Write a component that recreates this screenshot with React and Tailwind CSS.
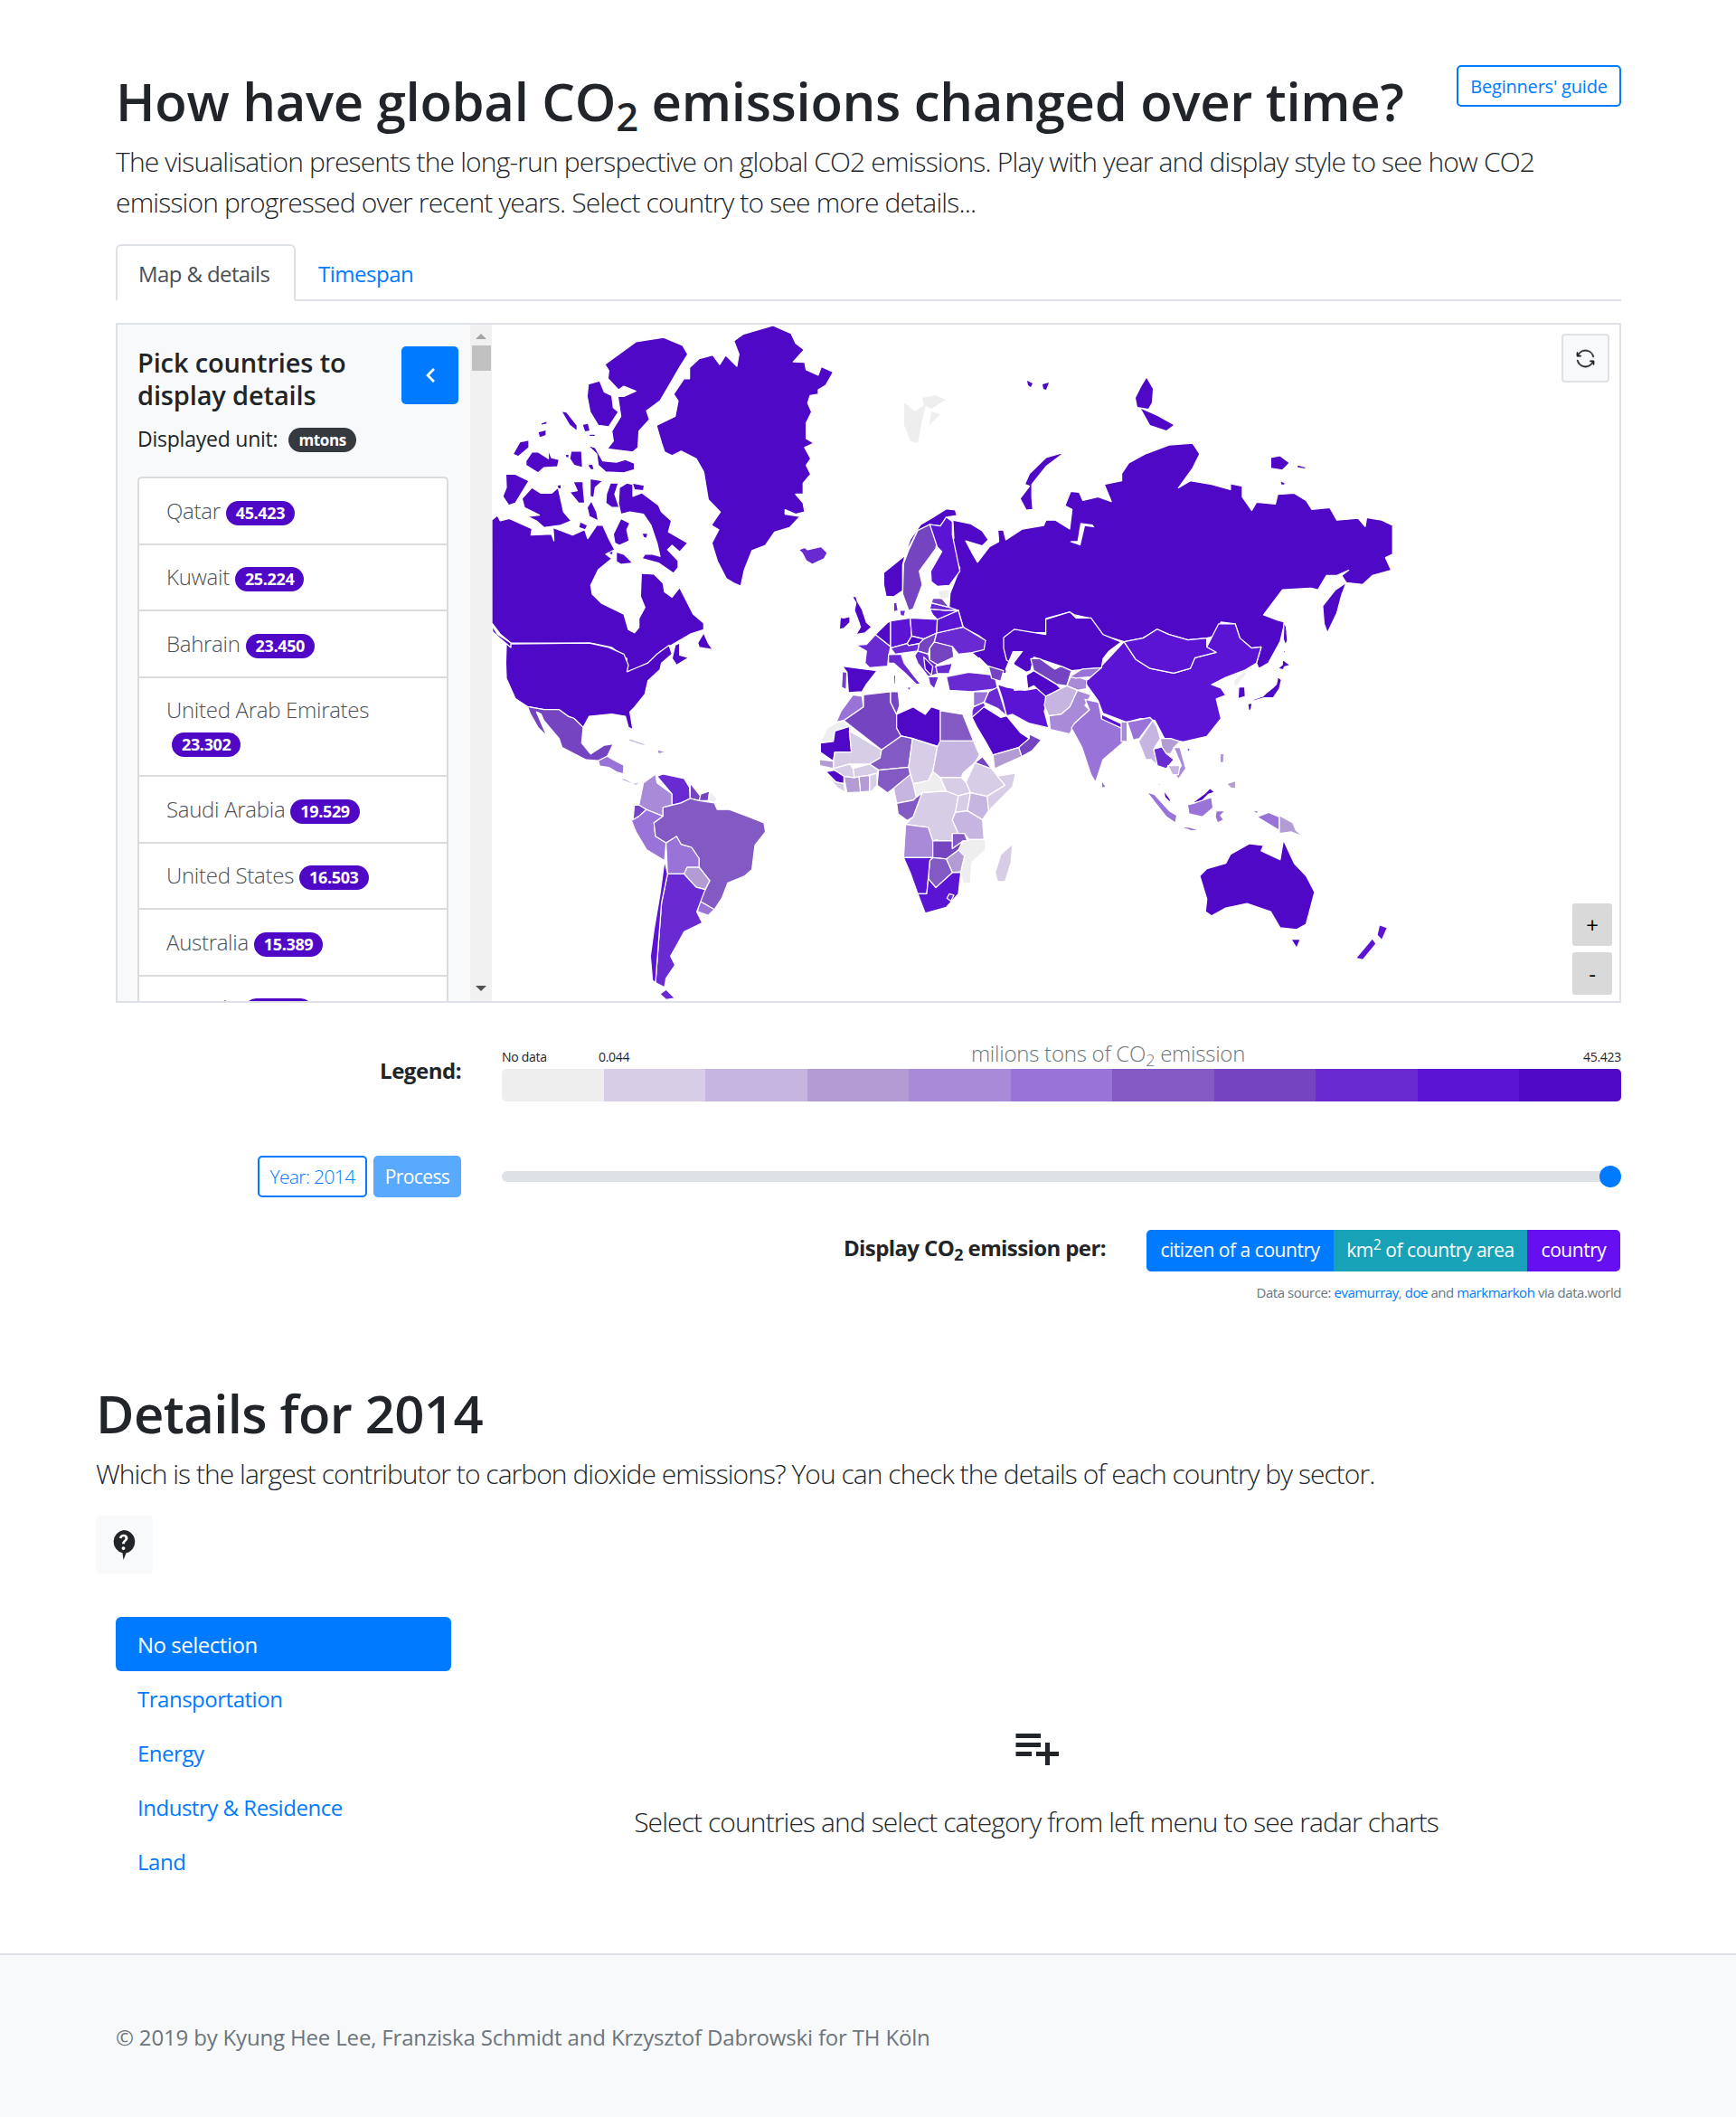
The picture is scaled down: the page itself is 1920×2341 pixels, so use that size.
import { FaChevronLeft } from 'react-icons/fa'
import { GoSync } from 'react-icons/go'
import { MdPlaylistAdd } from 'react-icons/md'

const C = ['#eeeeee', '#d8cde6', '#c5b5e0', '#b39cd4', '#a98ad8', '#9a73d9', '#835ac4', '#7544c0', '#6a2ad2', '#5c14d4', '#4f08c5']

const countries = [
  ['Qatar', '45.423'],
  ['Kuwait', '25.224'],
  ['Bahrain', '23.450'],
  ['United Arab Emirates', '23.302'],
  ['Saudi Arabia', '19.529'],
  ['United States', '16.503'],
  ['Australia', '15.389'],
  ['Canada', '15.117'],
]

// americas, traced at 3x / 2.036x
const westMap = [
  [10, '417,108 520,57 612,47 675,65 692,85 660,120 600,190 555,212 565,232 530,258 527,295 510,305 425,298 445,280 440,258 470,225 460,180 480,180 520,168 480,157 462,165 427,140 430,122'],
  [10, '362,152 400,145 415,170 440,178 445,205 462,215 430,248 395,245 368,215 358,180'],
  [10, '845,55 875,40 975,20 1035,38 1050,60 1078,75 1042,102 1080,103 1085,120 1125,132 1135,113 1175,125 1150,155 1125,165 1125,175 1098,178 1090,195 1103,215 1085,240 1085,275 1110,285 1080,295 1100,320 1085,335 1100,355 1075,375 1075,400 1050,400 1075,420 1080,440 1050,445 1015,435 1015,445 1065,450 1030,475 980,485 950,515 905,527 880,570 868,607 845,600 820,590 790,550 772,510 795,480 770,470 800,440 760,412 745,350 720,320 670,303 640,313 615,305 605,285 588,245 650,225 660,190 645,175 680,140 698,140 698,115 730,95 775,87 798,108 818,87 855,112 862,85'],
  [10, '205,240 225,235 225,242 205,245'],
  [10, '195,260 222,255 222,268 200,273'],
  [10, '272,213 290,215 325,245 325,258 300,245'],
  [10, '342,243 362,240 368,258 350,260'],
  [10, '365,265 385,265 385,270 365,270'],
  [10, '112,310 135,282 165,278 165,295 130,315'],
  [10, '155,325 175,305 195,305 230,320 228,298 240,318 265,322 260,338 215,340 195,352 155,335'],
  [10, '285,310 298,310 298,318 288,318'],
  [10, '305,303 340,303 343,340 315,335 300,320'],
  [10, '360,290 385,295 410,325 455,328 485,322 515,330 515,345 480,352 420,350 395,335 390,310'],
  [10, '360,335 375,330 382,345 370,345'],
  [10, '88,355 120,355 165,370 120,420 98,425 78,405 90,385'],
  [10, '142,410 175,385 205,398 240,398 262,385 280,440 305,460 270,470 215,475 190,460 160,450 200,447 150,430'],
  [10, '258,380 272,378 272,388 262,388'],
  [10, '312,372 345,372 345,382 350,420 330,420 300,395 325,392'],
  [10, '368,365 410,370 385,385 380,408 368,405'],
  [10, '358,430 372,415 390,440 395,460 365,450'],
  [10, '422,400 435,375 462,375 450,400 465,430 440,430 420,420'],
  [10, '465,385 490,375 510,378 510,405 540,397 595,425 605,440 638,460 628,485 692,510 665,530 640,515 625,525 660,550 660,565 645,578 595,555 540,545 550,535 575,535 600,540 590,510 570,470 545,445 500,440 470,445 462,420'],
  [10, '508,375 548,380 545,392 515,390'],
  [10, '335,462 360,470 352,480 330,475'],
  [10, '445,490 470,455 500,465 490,480 498,505 465,515 450,510'],
  [10, '540,488 560,488 555,500 545,497'],
  [10, '420,520 445,530 440,538 425,530'],
  [10, '455,530 480,535 510,555 470,558 455,552'],
  [10, '42,458 60,448 70,460 100,455 175,478 172,492 240,490 248,505 245,475 310,492 350,480 360,500 390,470 410,470 430,500 450,525 420,535 440,545 395,570 370,605 375,625 405,645 480,670 495,705 515,712 530,700 530,680 550,655 535,630 538,578 580,580 610,600 615,620 640,632 665,610 695,650 710,670 745,690 745,705 700,715 600,755 560,780 530,790 490,800 490,770 440,745 370,735 105,735 70,715 42,690'],
  [10, '90,737 365,735 430,745 480,760 495,785 490,800 525,790 560,780 590,760 630,740 640,760 605,780 600,795 560,820 550,850 515,880 500,890 510,930 495,925 485,900 440,895 365,900 345,925 315,905 295,900 265,885 215,885 160,878 120,860 90,815 88,780'],
  [10, '42,695 60,715 105,735 105,745 70,725 45,710'],
  [10, '725,735 745,712 760,735 775,750 730,745'],
  [10, '650,740 665,735 665,762 695,768 655,785 640,770'],
  [7, '160,878 215,885 265,885 295,900 315,905 345,925 340,960 370,985 415,965 445,962 425,990 395,1000 355,998 275,970 265,950 215,910 205,895 190,890 225,945 195,925 170,895'],
  [5, '395,1000 425,990 445,998 480,1010 478,1030 455,1025 430,1015 400,1012'],
  [4, '465,1035 510,1050 540,1050 520,1055 480,1045'],
  [2, '500,950 560,965 540,965 495,955'],
  [4, '590,975 620,980 595,985'],
  [4, '585,1030 590,1050 640,1075 640,1100 610,1105 610,1125 555,1110 530,1100 545,1050'],
  [8, '590,1035 610,1030 680,1040 698,1060 700,1085 670,1095 640,1100 640,1075'],
  [7, '700,1050 735,1080 730,1090 700,1085'],
  [7, '735,1075 765,1068 760,1090 730,1090'],
  [0, '765,1068 790,1085 780,1095 760,1090'],
  [7, '515,1100 530,1100 555,1110 530,1125 510,1135'],
  [5, '505,1135 530,1125 555,1110 610,1125 580,1140 585,1170 620,1185 615,1225 555,1200 520,1160'],
  [5, '620,1185 655,1170 670,1188 705,1195 730,1220 730,1240 690,1240 680,1255 625,1255'],
  [6, '580,1140 610,1125 610,1105 640,1100 670,1095 700,1085 730,1090 780,1095 790,1110 830,1110 890,1125 945,1140 950,1160 915,1190 905,1245 880,1260 825,1275 805,1310 780,1335 730,1315 750,1290 765,1270 730,1240 730,1220 705,1195 670,1188 655,1170 620,1185 585,1170'],
  [3, '690,1240 730,1240 765,1270 750,1290 720,1285 680,1255'],
  [5, '730,1315 780,1335 760,1348 725,1340'],
  [8, '625,1255 680,1255 720,1285 750,1290 722,1340 740,1365 680,1385 660,1410 635,1440 650,1460 620,1490 615,1510 585,1500 595,1410 605,1320'],
  [9, '615,1225 625,1255 605,1320 595,1410 585,1500 612,1512 575,1495 568,1440 580,1380 600,1300'],
  [8, '600,1525 620,1515 650,1535 620,1538'],
  [8, '1060,525 1080,520 1090,525 1135,518 1155,532 1145,545 1105,558 1085,550 1072,533'],
]

// russia, china and the far east, traced at 1.912x / 2.529x
const eastMap = [
  [10, '97,395 118,325 100,270 105,240 103,190 140,200 165,220 178,245 165,262 130,248 145,285 155,308 180,265 200,250 198,218 210,218 215,245 250,215 295,205 300,190 320,190 350,215 355,160 340,150 352,110 370,112 378,135 410,125 438,138 423,90 460,80 460,60 475,30 510,5 560,-20 610,-25 625,5 610,45 580,100 605,80 650,90 690,105 690,88 715,95 715,125 735,163 745,140 785,145 790,118 825,115 850,135 862,160 900,155 915,190 960,185 975,208 978,183 1010,190 1033,205 1033,285 1018,295 1030,330 990,345 970,370 935,365 925,345 940,330 915,345 893,345 875,385 860,380 800,385 760,455 790,470 805,475 795,530 770,590 750,605 745,590 755,545 735,548 710,520 700,480 670,475 655,515 640,520 600,525 560,510 535,495 505,520 465,530 415,510 395,465 360,455 350,447 300,465 300,505 265,505 235,497 212,520 220,545 235,570 214,620 178,600 143,561 172,527 160,515 125,490 115,445 95,435'],
  [10, '885,430 912,385 935,365 925,400 915,450 895,505 888,480'],
  [10, '245,130 265,95 255,90 265,60 300,15 340,0 300,40 270,90 270,125 272,160 258,162'],
  [10, '775,15 795,10 815,30 800,50 775,45'],
  [10, '830,35 850,42 848,47 832,44'],
  [10, '795,80 805,85 805,92 797,92'],
  [9, '430,580 465,530 490,580 520,605 570,618 605,605 615,575 660,560 640,545 665,480 700,480 710,520 735,548 755,545 745,590 720,610 700,620 680,630 650,650 670,660 680,680 660,690 670,745 640,795 590,810 550,800 530,750 500,745 470,755 420,730 410,695 380,640 390,635'],
  [9, '465,530 505,520 535,495 560,510 600,525 640,520 640,545 660,560 615,575 605,605 570,618 520,605 490,580'],
  [10, '625,1185 640,1165 680,1150 690,1125 730,1095 760,1100 755,1115 795,1140 802,1085 825,1150 850,1185 868,1230 850,1320 830,1335 795,1330 775,1285 725,1262 680,1275 650,1297 637,1285 640,1250'],
  [10, '818,1362 838,1362 830,1387'],
  [9, '1005,1322 1022,1330 1010,1365 1000,1350'],
  [9, '990,1360 998,1375 970,1420 955,1415'],
]

// europe, africa and the middle east, traced at 3x
const midMap = [
  [10, '262,220 330,165 350,110 385,60 420,40 470,8 500,12 505,30 475,35 450,65 415,60 375,80 335,155 325,195 325,280 295,300 270,298 262,260'],
  [7, '375,80 415,60 440,110 435,140 380,215 390,260 360,340 345,345 325,290 328,190 345,145'],
  [9, '415,60 450,65 470,35 490,50 490,95 515,215 480,262 440,265 420,250 418,215 455,150 440,135'],
  [8, '295,320 305,318 310,345 295,350'],
  [8, '315,345 335,345 330,365 318,362'],
  [10, '158,300 170,298 175,315 190,340 205,385 222,400 200,420 170,425 185,400 180,385 165,345 170,320'],
  [10, '118,368 130,370 150,365 150,385 130,405 115,408'],
  [8, '170,460 205,458 235,425 285,465 278,500 275,530 215,535 200,520 205,480'],
  [10, '125,530 240,545 205,590 190,615 145,618 140,550'],
  [7, '125,548 140,550 138,608 122,600'],
  [8, '278,492 320,490 330,520 365,565 385,590 370,590 335,555 295,520 278,520'],
  [8, '295,560 302,560 300,590 295,590'],
  [8, '340,600 355,600 345,612'],
  [10, '235,425 250,410 275,385 285,380 285,465'],
  [9, '285,380 350,370 355,430 340,455 285,470'],
  [9, '350,370 440,375 438,420 395,440 355,430'],
  [10, '340,455 355,430 395,440 380,455 345,462'],
  [8, '285,470 340,455 345,462 380,455 375,480 300,490'],
  [7, '380,455 395,440 438,420 430,450 415,470 410,490 375,480'],
  [8, '438,420 525,400 600,445 595,475 555,485 510,490 490,465 430,450'],
  [7, '430,450 490,465 495,500 440,525 415,510 415,470'],
  [9, '440,375 510,345 525,400 438,420'],
  [9, '415,340 465,345 510,345 440,375 425,360'],
  [8, '420,320 480,335 510,345 465,345 415,340'],
  [7, '425,305 455,305 480,335 420,320'],
  [0, '440,280 480,275 478,305 450,305'],
  [8, '375,480 410,490 415,510 440,525 435,530 440,555 410,565 375,520 365,495'],
  [10, '395,500 425,530 420,560 400,540'],
  [8, '435,530 490,520 480,555 440,555'],
  [8, '410,565 445,565 430,605 415,590'],
  [8, '470,565 545,550 630,560 640,605 555,615 480,610'],
  [7, '610,530 660,545 650,580 620,570'],
  [8, '610,615 640,600 670,695 640,670 595,650'],
  [5, '560,615 610,615 595,650 560,665'],
  [8, '555,680 560,665 595,650 600,665 555,705'],
  [9, '640,590 670,600 730,610 790,600 805,640 795,680 810,735 745,720 690,690 670,695 655,635'],
  [10, '555,700 595,665 650,700 670,695 715,750 745,770 710,800 625,825 600,780 570,730'],
  [7, '745,755 785,775 755,810 720,830 710,800 745,770'],
  [3, '625,825 710,800 720,830 630,870'],
  [10, '660,435 695,408 800,425 800,375 880,350 900,370 950,370 990,425 1050,450 1010,480 990,505 985,535 885,545 850,530 760,500 750,545 735,550 670,510 660,470'],
  [7, '750,505 780,505 830,540 850,530 885,545 870,595 835,590 760,545'],
  [10, '735,560 760,545 835,590 850,605 800,630 760,595 740,605'],
  [4, '870,595 885,560 935,575 935,605 905,610'],
  [5, '880,565 920,540 985,535 950,565 900,570'],
  [2, '800,630 870,595 905,610 880,665 850,690 810,695 795,660'],
  [4, '810,695 850,690 880,665 905,610 950,625 930,660 945,675 895,720 880,755 815,740'],
  [5, '930,640 975,650 985,700 1070,745 1060,780 990,840 965,915 950,890 920,800 885,735 895,720 945,675'],
  [5, '985,908 1000,930 985,935'],
  [9, '985,690 1060,725 1060,740 985,705'],
  [5, '160,625 190,630 195,665 130,710 105,715 120,680'],
  [0, '105,718 130,712 148,730 100,745 95,780 52,785 75,735'],
  [7, '195,625 285,615 285,650 305,690 305,735 320,762 255,808 130,710 195,665'],
  [7, '285,615 310,615 315,660 305,690 285,650'],
  [10, '305,690 360,665 400,690 420,665 450,675 450,798 358,770 320,762 305,735'],
  [6, '450,678 525,690 560,778 450,778'],
  [10, '100,745 148,730 155,815 100,815 95,845 52,815 52,785 95,780'],
  [1, '148,745 255,808 250,835 215,855 150,855 95,870 95,845 100,815 155,815'],
  [6, '255,808 320,762 358,770 345,865 245,875 215,855 250,835'],
  [1, '358,770 440,798 430,855 425,880 410,910 360,920 345,865'],
  [2, '450,778 560,778 580,825 565,850 525,885 520,900 450,900 425,880 430,855 440,798'],
  [1, '535,915 565,850 620,870 640,895 665,925 605,962 550,950'],
  [7, '565,850 590,830 620,870'],
  [1, '640,895 700,885 690,930 610,1010 605,962 665,925'],
  [1, '450,900 520,900 535,915 550,950 510,960 470,945'],
  [0, '360,920 410,910 425,880 450,900 470,945 390,950 370,965'],
  [6, '245,875 345,865 350,890 295,935 275,950 240,925'],
  [2, '295,935 350,890 360,920 370,965 360,975 305,985'],
  [1, '160,870 215,855 245,875 240,885 210,892 165,900'],
  [1, '215,892 240,885 240,925 222,945 215,945'],
  [3, '180,897 215,892 215,945 185,948'],
  [3, '130,895 165,900 180,897 185,948 140,950'],
  [10, '70,880 100,875 130,895 130,920 105,915'],
  [1, '95,870 150,855 160,870 165,900 130,895 100,875'],
  [3, '48,840 95,845 95,870 50,860'],
  [1, '85,905 105,915 130,920 135,948 110,935'],
  [6, '305,985 360,975 370,965 390,950 360,1030 340,1042 310,1020'],
  [1, '390,950 470,945 510,960 500,1015 490,1040 510,1085 490,1085 490,1110 425,1110 410,1065 335,1055 360,1030'],
  [1, '510,960 550,950 540,1010 500,1015'],
  [2, '550,950 605,962 610,1010 590,1040 540,1010'],
  [2, '500,1015 540,1010 590,1040 595,1105 545,1105 530,1085 510,1085 490,1040'],
  [4, '335,1055 410,1065 425,1110 440,1105 425,1165 328,1165'],
  [7, '425,1110 490,1110 490,1135 525,1110 510,1140 470,1170 425,1165'],
  [6, '510,1085 530,1085 540,1110 525,1110 490,1135 490,1085'],
  [0, '545,1105 600,1105 600,1140 555,1180 550,1250 525,1250 518,1215 530,1160 510,1140 525,1110 540,1110'],
  [3, '470,1170 510,1140 530,1160 518,1212 490,1215'],
  [6, '415,1175 425,1165 470,1170 490,1215 435,1265 410,1235'],
  [9, '328,1165 425,1165 415,1175 410,1235 405,1285 375,1285 350,1215'],
  [9, '375,1285 405,1285 410,1235 435,1265 490,1215 518,1215 515,1240 510,1285 470,1330 400,1350'],
  [8, '480,1285 495,1290 485,1310 472,1300'],
  [1, '690,1120 685,1180 665,1245 640,1245 632,1215 650,1155'],
]

// south east asia, traced at 3x
const asiaMap = [
  [4, '0,535 20,535 20,600 0,600'],
  [5, '20,535 50,530 95,520 105,530 60,590 40,595'],
  [2, '58,600 105,530 118,550 130,590 108,625 120,680 100,660 82,660'],
  [3, '130,590 165,590 195,600 175,620 165,640 145,640 135,618'],
  [4, '175,620 195,620 215,690 190,725 180,710 200,680'],
  [8, '108,625 135,618 150,640 175,660 150,690 120,680'],
  [2, '155,680 195,680 190,710 170,710'],
  [10, '140,760 165,795 160,800 145,785'],
  [10, '115,725 135,750 125,745'],
  [10, '240,800 280,770 295,755 310,768 290,775 270,795 240,805'],
  [5, '220,810 240,805 270,795 300,785 305,820 270,850 225,840'],
  [5, '85,768 110,775 160,830 185,845 180,870 150,850'],
  [5, '185,880 230,885 265,897 230,895'],
  [5, '315,830 345,830 330,845 340,860 320,870 312,850'],
  [3, '328,640 342,640 340,670 328,670'],
  [3, '350,740 380,730 380,755 365,755'],
  [5, '435,828 455,830 450,840'],
  [5, '450,850 490,835 525,850 525,895 500,880'],
  [3, '525,845 570,870 580,895 605,915 565,900 525,905'],
  [10, '535,328 562,347 542,352 538,362 520,358 535,345'],
  [10, '520,385 532,395 525,425 505,455 475,455 440,465 435,462 470,450 480,440 505,420 515,410'],
  [10, '420,475 435,472 430,497 423,495'],
  [10, '390,420 410,418 412,450 388,458'],
  [0, '375,395 410,365 418,375 395,400 385,418 372,410'],
  [10, '218,625 233,620 222,635'],
  [10, '540,205 548,220 552,265 545,280 538,260'],
  [10, '540,290 545,305 538,305'],
]

function Polys({ items, transform }) {
  return (
    <g transform={transform}>
      {items.map(([c, pts], i) => (
        <polygon key={i} points={pts} fill={C[c]} stroke="#ffffff" strokeWidth="1.25" strokeLinejoin="round" vectorEffect="non-scaling-stroke" />
      ))}
    </g>
  )
}

function WorldMap() {
  return (
    <svg className="block w-[1247px] h-[748px]" viewBox="544 359 1247 748">
      <Polys items={eastMap} transform="translate(1000 500) scale(0.523 0.3954)" />
      <g fill="#eeeeee">
        <polygon points="1000,445 1012,455 1024,447 1020,465 1015,490 1007,488 1000,470" />
        <polygon points="1020,440 1035,437 1046,442 1030,452 1022,448" />
        <polygon points="1030,455 1040,458 1028,470" />
      </g>
      <g fill="#4f08c5">
        <polygon points="1136,421 1142,424 1140,428 1137,426" />
        <polygon points="1153,425 1160,423 1157,431 1154,430" />
        <polygon points="1268,418 1275,430 1274,445 1270,452 1258,450 1256,440 1262,428" />
        <polygon points="1262,452 1280,460 1298,470 1290,476 1272,470" />
      </g>
      <Polys items={westMap} transform="translate(530 350) scale(0.3333 0.4912)" />
      <Polys items={midMap} transform="translate(890 560) scale(0.3333)" />
      <Polys items={asiaMap} transform="translate(1240 620) scale(0.3333)" />
      {/* seas that cut the land */}
      <g fill="#ffffff" transform="translate(890 560) scale(0.3333)">
        <polygon points="478,550 500,510 520,490 545,487 550,510 580,500 610,530 600,555 545,552" />
        <polygon points="690,480 725,480 695,520 725,610 695,612 665,540" />
        <polygon points="880,118 915,130 930,65 962,70 955,60 915,55 905,115 885,115" />
        <polygon points="555,700 525,695 590,820 625,880 630,860 600,800" />
      </g>
    </svg>
  )
}

function Sidebar() {
  return (
    <div className="w-[414px] h-full flex shrink-0">
      <div className="w-[390px] h-full bg-[#f8f9fa] overflow-hidden pl-[22px] pr-[13px] pt-[24px]">
        <div className="flex justify-between items-start">
          <h5 className="text-[29px] leading-[36px] font-semibold text-[#212529] w-[285px] tracking-[-0.005em]">Pick countries to display details</h5>
          <button className="w-[63px] h-[64px] bg-[#007bff] rounded-[5px] flex items-center justify-center text-white">
            <FaChevronLeft size={18} />
          </button>
        </div>
        <div className="mt-[12px] text-[23px] leading-[36px] text-[#212529] font-normal tracking-[-0.01em]">
          Displayed unit:
          <span className="inline-block ml-[12px] align-[1px] h-[27px] leading-[27px] px-[11px] rounded-full bg-[#343a40] text-white text-[17px] font-bold tracking-[-0.02em]">mtons</span>
        </div>
        <ul className="mt-[24px] w-[344px]">
          {countries.map(([name, val], i) => (
            <li key={name} className={`border-2 border-b-0 border-[#dcdcdc] bg-white px-[30px] py-[17.75px] text-[24px] leading-[36px] font-light text-[#495057] tracking-[-0.012em] ${i === 0 ? 'rounded-t-[5px]' : ''}`}>
              {name}
              <span className="inline-block ml-[6px] h-[27px] leading-[27px] px-[11px] rounded-full bg-[#4f08c5] text-white text-[18px] font-bold tracking-[-0.02em]">{val}</span>
            </li>
          ))}
        </ul>
      </div>
      <div className="w-[24px] h-full bg-[#f1f1f1] flex flex-col justify-between items-center py-[10px]">
        <div className="flex flex-col items-center gap-[7px]">
          <div className="w-0 h-0 border-x-[6px] border-x-transparent border-b-[6px] border-b-[#a3a3a3]"></div>
          <div className="w-[21px] h-[28px] bg-[#c1c1c1]"></div>
        </div>
        <div className="w-0 h-0 border-x-[6px] border-x-transparent border-t-[6px] border-t-[#505050] mb-[1px]"></div>
      </div>
    </div>
  )
}

function Sub() {
  return <sub>2</sub>
}

export default function App() {
  return (
    <div className="w-[1920px] h-[2341px] bg-white text-[#212529] font-['Open_Sans',sans-serif] overflow-hidden">
      <div className="pl-[128px] pr-[127px] pt-[72px]">
        <div className="flex justify-between items-start">
          <h1 className="mt-[4px] text-[58px] leading-[72px] font-semibold tracking-[-0.005em]">How have global CO<Sub /> emissions changed over time?</h1>
          <button className="w-[182px] h-[46px] pt-[2px] border-2 border-[#007bff] rounded-[5px] text-[#007bff] text-[20px] font-normal tracking-[-0.01em]">Beginners' guide</button>
        </div>
        <p className="mt-[8px] w-[1640px] text-[30px] leading-[45px] font-light tracking-[-0.028em]">The visualisation presents the long-run perspective on global CO2 emissions. Play with year and display style to see how CO2 emission progressed over recent years. Select country to see more details...</p>

        <div className="mt-[24px] flex border-b-2 border-[#dee2e6] h-[63px]">
          <div className="w-[199px] h-[63px] border-2 border-[#dee2e6] border-b-white rounded-t-[6px] bg-white px-[23px] py-[13px] text-[24px] leading-[36px] font-normal text-[#495057] tracking-[-0.025em]">Map &amp; details</div>
          <div className="px-[25px] py-[15px] text-[24px] leading-[36px] text-[#007bff] tracking-[-0.02em]">Timespan</div>
        </div>

        <div className="mt-[24px] h-[752px] border-2 border-[#dee2e6] flex relative overflow-hidden">
          <Sidebar />
          <WorldMap />
          <button className="absolute top-[10px] right-[11px] w-[53px] h-[54px] bg-[#f8f9fa] border-2 border-[#dee2e6] rounded-[4px] flex items-center justify-center text-[#212529]">
            <GoSync size={21} stroke="currentColor" strokeWidth={0.6} />
          </button>
          <div className="absolute top-[640px] right-[8px] w-[44px] h-[47px] bg-[#d9d9d9] rounded-[3px] flex items-center justify-center text-[24px] text-black">+</div>
          <div className="absolute top-[694px] right-[8px] w-[44px] h-[47px] bg-[#d9d9d9] rounded-[3px] flex items-center justify-center text-[24px] text-black">-</div>
        </div>

        <div className="mt-[43px] flex">
          <div className="w-[382px] pt-[14px] text-right text-[24px] leading-[36px] font-bold tracking-[-0.02em]">Legend:</div>
          <div className="ml-[45px] flex-1">
            <div className="h-[30px] flex items-end text-[14px] leading-[22px] tracking-[-0.02em] pb-[2px]">
              <span className="w-[107px]">No data</span>
              <span className="w-[38px]">0.044</span>
              <span className="flex-1 text-center text-[24px] leading-[30px] mb-[0px] font-light text-[#6c757d] tracking-[-0.01em]">milions tons of CO<Sub /> emission</span>
              <span>45.423</span>
            </div>
            <div className="h-[36px] flex rounded-[5px] overflow-hidden">
              {C.map(c => (
                <div key={c} className="flex-1" style={{ backgroundColor: c }}></div>
              ))}
            </div>
          </div>
        </div>

        <div className="mt-[60px] flex items-center">
          <div className="w-[382px] flex justify-end gap-[7px] text-[21px] tracking-[-0.03em]">
            <button className="w-[121px] h-[46px] pt-[2px] border-2 border-[#007bff] rounded-[5px] text-[#007bff] font-light">Year: 2014</button>
            <button className="w-[97px] h-[46px] pt-[2px] bg-[#59a9ff] rounded-[5px] text-white">Process</button>
          </div>
          <div className="ml-[45px] flex-1 h-[12px] rounded-full bg-[#dee2e6] relative">
            <div className="absolute right-0 -top-[6px] w-[24px] h-[24px] rounded-full bg-[#007bff]"></div>
          </div>
        </div>

        <div className="mt-[36px] flex justify-end items-center gap-[45px]">
          <div className="text-[24px] leading-[36px] font-bold pb-[6px] tracking-[-0.025em]">Display CO<Sub /> emission per:</div>
          <div className="flex h-[46px] mr-[1px] rounded-[5px] overflow-hidden text-white text-[21px] font-normal tracking-[-0.022em]">
            <div className="w-[207px] bg-[#007bff] flex items-center justify-center">citizen of a country</div>
            <div className="w-[214px] bg-[#17a2b8] flex items-center justify-center"><span>km<sup>2</sup> of country area</span></div>
            <div className="w-[103px] bg-[#6610f2] flex items-center justify-center">country</div>
          </div>
        </div>

        <div className="mt-[12px] text-right text-[15px] leading-[22px] font-normal text-[#6c757d] tracking-[-0.03em]">
          Data source: <span className="text-[#007bff]">evamurray</span>, <span className="text-[#007bff]">doe</span> and <span className="text-[#007bff]">markmarkoh</span> via data.world
        </div>
      </div>

      <div className="pl-[106px] mt-[87px]">
        <h1 className="text-[58px] leading-[72px] font-semibold tracking-[-0.01em]">Details for 2014</h1>
        <p className="mt-[8px] text-[30px] leading-[45px] font-light tracking-[-0.032em]">Which is the largest contributor to carbon dioxide emissions? You can check the details of each country by sector.</p>
        <button className="mt-[24px] w-[63px] h-[64px] pr-[2px] bg-[#f8f9fa] rounded-[5px] flex items-center justify-center">
          <svg width="27" height="35" viewBox="0 0 26 34">
            <path d="M13 1a12.5 12.5 0 0 1 3 24.6L13 33l-1-7.5A12.5 12.5 0 0 1 13 1z" fill="#212529" />
            <path d="M8.5 9.5C9 6.5 11 5.5 13.2 5.5c2.7 0 4.6 1.7 4.6 4 0 3.4-3.4 3.4-3.4 6.4h-2.8c0-4 3.3-4.2 3.3-6.3 0-1-.7-1.6-1.8-1.6-1.2 0-1.8.7-2 2z" fill="#ffffff" />
            <circle cx="13" cy="20.5" r="1.9" fill="#ffffff" />
          </svg>
        </button>
      </div>

      <div className="ml-[128px] mr-[127px] mt-[48px] flex">
        <div className="w-[371px] pt-[1px] text-[24px] leading-[36px] tracking-[-0.02em]">
          <div className="px-[24px] py-[12px] -mt-[1px] pt-[13px] pb-[11px] rounded-[6px] bg-[#007bff] text-white">No selection</div>
          <div className="px-[24px] py-[12px] pt-[13px] pb-[11px] text-[#007bff]">Transportation</div>
          <div className="px-[24px] py-[12px] pt-[13px] pb-[11px] text-[#007bff]">Energy</div>
          <div className="px-[24px] py-[12px] pt-[13px] pb-[11px] text-[#007bff]">Industry &amp; Residence</div>
          <div className="px-[24px] py-[12px] pt-[13px] pb-[11px] text-[#007bff]">Land</div>
        </div>
        <div className="flex-1 pt-[114px] flex flex-col items-center">
          <MdPlaylistAdd size={60} />
          <p className="mt-[30px] text-[30px] leading-[45px] font-light tracking-[-0.03em]">Select countries and select category from left menu to see radar charts</p>
        </div>
      </div>

      <footer className="mt-[72px] h-[181px] bg-[#f8f9fa] border-t-2 border-[#dee2e6] pl-[128px] pt-[73px] text-[24px] leading-[36px] font-normal text-[#6c757d] tracking-[-0.007em]">
        © 2019 by Kyung Hee Lee, Franziska Schmidt and Krzysztof Dabrowski for TH Köln
      </footer>
    </div>
  )
}
